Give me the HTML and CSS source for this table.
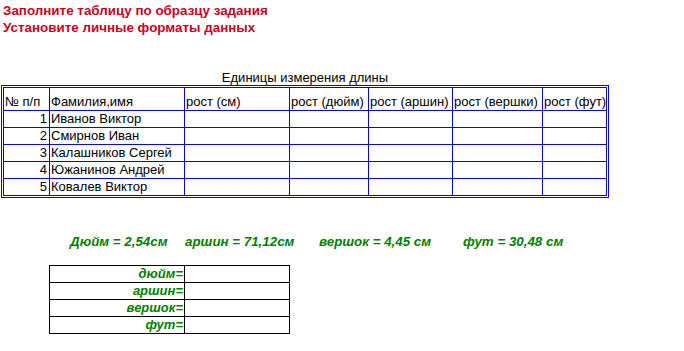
FILE: index.html
```html
<!DOCTYPE html>
<html lang="ru">
<head>
<meta charset="utf-8">
<link rel="stylesheet" href="styles.css">
</head>
<body>
<div class="page">
  <div class="task">
    <div>Заполните таблицу по образцу задания</div>
    <div>Установите личные форматы данных</div>
  </div>
  <div class="block">
    <div class="title">Единицы измерения длины</div>
    <table class="main">
      <colgroup>
        <col class="c1"><col class="c2"><col class="c3"><col class="c4"><col class="c5"><col class="c6"><col class="c7">
      </colgroup>
      <tr class="head">
        <td>№ п/п</td><td>Фамилия,имя</td><td>рост (см)</td><td>рост (дюйм)</td><td>рост (аршин)</td><td>рост (вершки)</td><td class="last">рост (фут)</td>
      </tr>
      <tr><td class="num">1</td><td>Иванов Виктор</td><td></td><td></td><td></td><td></td><td class="last"></td></tr>
      <tr><td class="num">2</td><td>Смирнов Иван</td><td></td><td></td><td></td><td></td><td class="last"></td></tr>
      <tr><td class="num">3</td><td>Калашников Сергей</td><td></td><td></td><td></td><td></td><td class="last"></td></tr>
      <tr><td class="num">4</td><td>Южанинов Андрей</td><td></td><td></td><td></td><td></td><td class="last"></td></tr>
      <tr class="end"><td class="num">5</td><td>Ковалев Виктор</td><td></td><td></td><td></td><td></td><td class="last"></td></tr>
    </table>
  </div>
  <div class="units">
    <span>Дюйм = 2,54см</span>
    <span>аршин = 71,12см</span>
    <span>вершок = 4,45 см</span>
    <span>фут = 30,48 см</span>
  </div>
  <table class="conv">
    <tr><td class="lbl">дюйм=</td><td class="val"></td></tr>
    <tr><td class="lbl">аршин=</td><td class="val"></td></tr>
    <tr><td class="lbl">вершок=</td><td class="val"></td></tr>
    <tr><td class="lbl">фут=</td><td class="val"></td></tr>
  </table>
</div>
</body>
</html>
```
FILE: styles.css
```css
html, body {
  margin: 0;
  padding: 0;
  background: #ffffff;
}
body {
  font-family: "Liberation Sans", Arial, sans-serif;
  font-size: 13px;
  color: #000000;
}
.page {
  width: 684px;
  height: 351px;
  overflow: hidden;
}
.task {
  padding: 2px 0 0 3px;
  font-weight: bold;
  font-size: 13.4px;
  line-height: 17px;
  color: #d0001c;
}
.block {
  width: 608px;
  margin: 34px 0 0 1px;
}
.title {
  text-align: center;
  line-height: 15px;
  height: 15px;
}
table {
  border-spacing: 0;
  table-layout: fixed;
}
.main {
  width: 608px;
  border: 3px double #0000ff;
}
.main td {
  box-sizing: border-box;
  padding: 0 2px 0 1px;
  height: 17px;
  line-height: 16px;
  vertical-align: bottom;
  white-space: nowrap;
  overflow: hidden;
  border-right: 1px solid #0000ff;
  border-bottom: 1px solid #0000ff;
}
.main .head td {
  height: 23px;
}
.main td.last {
  border-right: none;
}
.main .end td {
  border-bottom: none;
  height: 16px;
}
.main td.num {
  text-align: right;
}
.c1 { width: 46px; }
.c2 { width: 135px; }
.c3 { width: 105px; }
.c4 { width: 79px; }
.c5 { width: 84px; }
.c6 { width: 90px; }
.c7 { width: 63px; }
.units {
  display: grid;
  grid-template-columns: 115px 134px 144px auto;
  margin-top: 36px;
  padding-left: 70px;
  font-size: 13.33px;
  line-height: 16px;
  font-weight: bold;
  font-style: italic;
  color: #008000;
  white-space: nowrap;
}
.conv {
  margin: 15px 0 0 49px;
  width: 241px;
  border-top: 1px solid #000000;
  border-left: 1px solid #000000;
}
.conv td {
  box-sizing: border-box;
  height: 17px;
  line-height: 16px;
  padding: 0 1px 0 1px;
  vertical-align: bottom;
  border-right: 1px solid #000000;
  border-bottom: 1px solid #000000;
}
.conv .lbl {
  width: 135px;
  text-align: right;
  font-weight: bold;
  font-style: italic;
  color: #008000;
}
.conv .val {
  width: 105px;
}
```
